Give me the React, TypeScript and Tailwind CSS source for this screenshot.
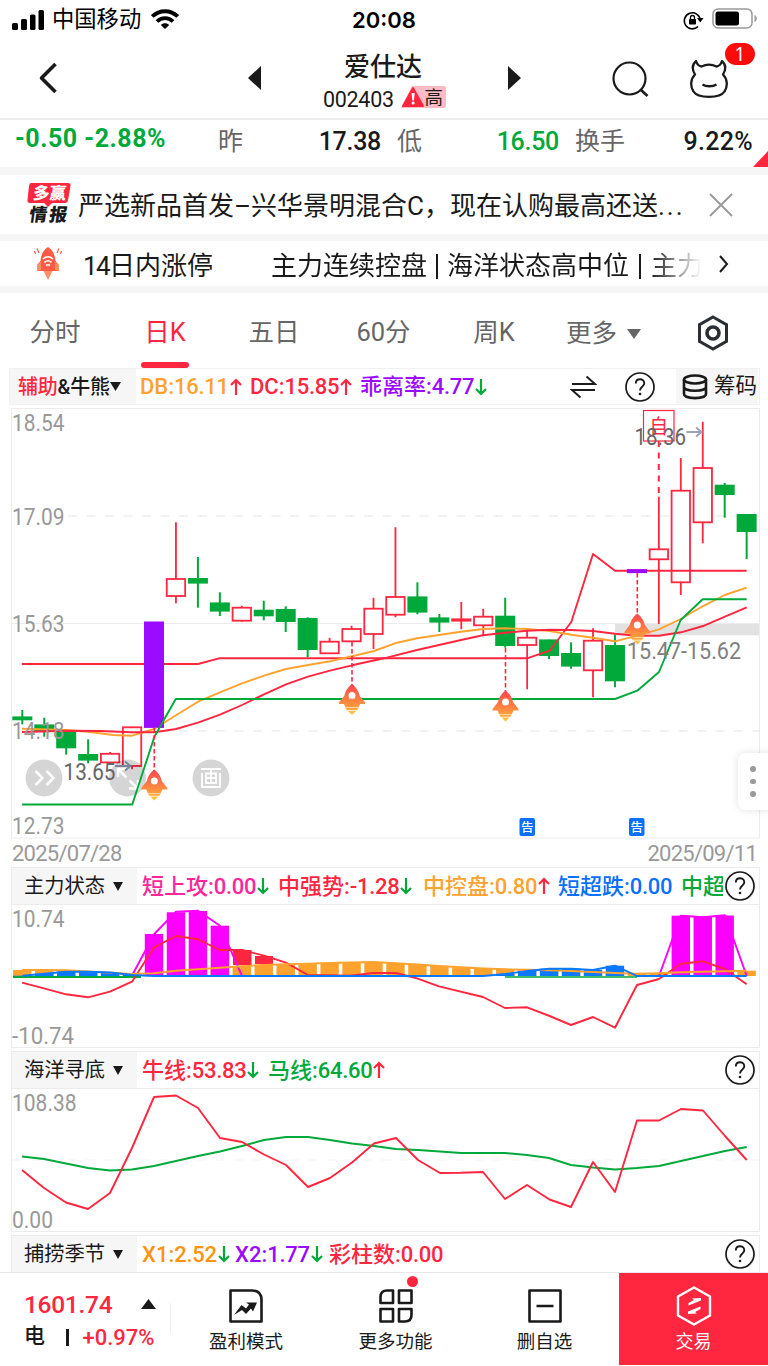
import type { ReactNode } from 'react'
import { clsx } from 'clsx'

const RED = '#ff263f'
const GREEN = '#00a93a'
const ORANGE = '#ffa22e'
const PURPLE = '#9a0bff'
const MAGENTA = '#fb00ff'
const BLUE = '#0a78ff'

// x of the n-th trading day
const dayX = (i: number) => 22.3 + i * 21.95

type Candle = [kind: 'up' | 'down' | 'mark', top: number, bottom: number, high: number, low: number]

const candles: Candle[] = [
  ['down', 716.7, 720, 710, 724.3],
  ['down', 724.7, 731, 717.7, 736.7],
  ['down', 731.7, 748, 731, 754.7],
  ['down', 754.3, 760.3, 739.3, 763.3],
  ['up', 753.8, 762.4, 752, 765],
  ['up', 727.3, 766, 727, 769.3],
  ['mark', 621.7, 727.7, 621.7, 727.7],
  ['up', 579, 596, 522.3, 603.3],
  ['down', 578.3, 583.3, 557, 607.7],
  ['down', 602.7, 611.3, 592.3, 616],
  ['up', 607.7, 620.7, 605.7, 621.7],
  ['down', 610, 616, 600.7, 620.3],
  ['down', 609.3, 621.7, 606.3, 632],
  ['down', 618.3, 649.7, 617.3, 657.3],
  ['up', 641.7, 653.3, 637.7, 654],
  ['up', 629, 641.3, 625.7, 641.3],
  ['up', 608.7, 634, 597.7, 649],
  ['up', 597, 614.7, 527.3, 617.3],
  ['down', 596.7, 612.3, 582.3, 614.3],
  ['down', 617.7, 622.3, 614, 632],
  ['up', 619.3, 620.7, 602, 629.3],
  ['up', 616.7, 625.3, 608.7, 636],
  ['down', 616, 645.7, 597.7, 647.7],
  ['up', 637.7, 645, 629.3, 689.3],
  ['down', 639.7, 655.7, 639.7, 659],
  ['down', 653.3, 666.3, 642.3, 668.7],
  ['up', 640.7, 670.3, 628.3, 697.3],
  ['down', 645.3, 681, 634.7, 687.3],
  ['mark', 569.3, 573, 569.3, 573],
  ['up', 549.3, 559.3, 496.7, 624],
  ['up', 490.7, 582.3, 458, 595],
  ['up', 468, 522.3, 421.7, 543.3],
  ['down', 485, 494.7, 483, 517.7],
  ['down', 514.3, 531.7, 514.3, 559],
]

const upperBand = '22,664 198,664 219,658.3 527,658.3 549.7,650.7 571.3,622 593,554 615,570.7 746.7,570.7'
const lowerBand =
  '22,804.5 132.3,804.5 154.3,737 175.7,699 615,699 637.3,690.7 659,672 680.7,620 702.7,599.3 746.7,599.3'
const dbLine =
  '22,728.7 66,730 88,731.7 113,735 132,735.7 154,729 176,715.3 198,701.7 220,692.3 242,683.3 264,675.7 286,669 308,665 330,661.3 352,656.3 374,651 395,643.3 417,638.3 439,635 461,631.7 483,629 505,628.3 527,629 549.7,631 571.3,634.7 593,637.7 615,641.3 637.3,635.7 659,629.3 680.7,619 702.7,606.3 724.7,595 746.7,587.7'
const dcLine =
  '22,732 66,730.7 100,731 132,732.3 154,732.3 163,731 176,729 198,722.7 220,714.7 242,705 264,694.3 286,684.3 308,676.7 330,670.7 352,665.3 384,658.3 417,650 439,645 461,640 483,635.3 505,632.7 527,630.7 549.7,629.7 571,630 593,631 615,633.7 637,635.7 659,635.7 681,632.3 703,626 725,616.7 746.7,607.3'

const orangeTops = [
  970, 970, 970.3, 971.5, 972.8, 974, 973.3, 970.7, 969.2, 967.7, 966.2, 964.9, 964.2, 963.6, 963, 962.5, 962, 963.3,
  964.5, 966, 967.3, 968.5, 969.3, 969.8, 970.3, 971, 972, 973, 973.7, 973.2, 972.3, 971.7, 971.3, 970.7,
]
const blueTops = [
  975.7, 973.7, 971.7, 971.7, 972.5, 975, 976, 976, 976, 976, 976, 976, 976, 976, 976, 976, 976, 976, 976, 976, 976,
  976, 974, 971, 968.7, 968.7, 970, 965.7, 976, 976, 976, 976, 976, 976,
]
const magentaBars: [number, number][] = [
  [6, 934], [7, 912.3], [8, 911], [9, 925.7], [30, 915.7], [31, 917], [32, 915.5],
]
const strengthLine =
  '22,982.7 44,988.3 66,994.3 88,997.3 110,991.7 132,981.7 154,947.3 176,936 198,939.3 220,950 242,950 264,955.7 286,962.7 308,975 350,975.7 373,973 396,973 417,978.3 439,986.3 483,997 505,1008 527,1007.3 549.7,1016 571,1025 593,1017 615,1027.7 637,985 659,979 681,963.7 703,961.3 725,969 746.7,984.3'

const bullLine =
  '22,1170 44,1188 66,1202.5 88,1209 110,1193 132,1148 154,1097 176,1095.5 198,1108 220,1138 242,1142 264,1154.5 286,1165 308,1187 330,1178 352,1162.5 374,1143.5 396,1138 418,1160 440,1173 461,1172.8 483,1172 505,1199 527,1185 549.5,1199.5 571,1207 593,1162 615,1192 637,1120.5 659,1120.5 681,1109 703,1110.5 725,1136 746.7,1160'
const horseLine =
  '22,1156.5 44,1159 66,1163.5 88,1168 110,1170.5 132,1169.5 154,1166 176,1161 198,1156 220,1151.5 242,1146 264,1140 286,1137 308,1137 330,1140 352,1143.5 374,1146 396,1149 418,1150 440,1151.5 461,1153 505,1153 527,1155 549,1158 571,1165 593,1167.5 615,1169.5 637,1168 659,1166 681,1161 703,1156 725,1151 746.7,1147'

const Line = ({ points, color, width = 1.9 }: { points: string; color: string; width?: number }) => (
  <polyline points={points} fill="none" stroke={color} strokeWidth={width} strokeLinejoin="round" />
)

interface LabelProps {
  x: number
  y: number
  w: number
  size?: number
  color?: string
  children: string
}

function Label({ x, y, w, size = 23, color = '#999', children }: LabelProps) {
  return (
    <text x={x} y={y} fontSize={size} fill={color} textLength={w} lengthAdjust="spacingAndGlyphs">
      {children}
    </text>
  )
}

function Rocket({ x, y }: { x: number; y: number }) {
  return (
    <g transform={`translate(${x - 13} ${y})`}>
      <path
        d="M13 0C16 2.500 19.500 6 20.500 11.500L26 18.500V20H21L19.500 23.500H6.500L5 20H0V18.500L5.500 11.500C6.500 6 10 2.500 13 0Z"
        fill="url(#rocket)"
      />
      <path d="M6.500 24H19.500L18 26.200H8Z" fill="#ffa83e" />
      <path d="M9 27H17L13 31Z" fill="#ffc03e" />
      <circle cx="13" cy="11.500" r="3.500" fill="#fff" />
    </g>
  )
}

function KLineChart() {
  return (
    <svg width="768" height="432" viewBox="0 407 768 432" className="block shrink-0">
      <defs>
        <linearGradient id="rocket" x1="0" y1="0" x2="0" y2="1">
          <stop offset="0" stopColor="#ff4350" />
          <stop offset="1" stopColor="#ff9d3c" />
        </linearGradient>
      </defs>
      <rect x="11.500" y="408.500" width="748" height="429.500" fill="none" stroke="#ececec" />
      <path d="M68 516H759M68 731H759" stroke="#eee" strokeWidth="1.300" strokeDasharray="9 9.500" />
      <path d="M12 623.500H759" stroke="#ececec" />
      <rect x="615" y="624" width="144" height="11.300" fill="#e2e2e2" />

      {candles.map(([kind, top, bottom, high, low], i) => {
        const x = dayX(i)
        if (kind === 'mark') return <rect key={i} x={x - 10} y={top} width="20" height={bottom - top} fill={PURPLE} />
        if (kind === 'down') {
          return (
            <g key={i} fill={GREEN}>
              <rect x={x - 1} y={high} width="2" height={low - high} />
              <rect x={x - 10} y={top - 0.3} width="20" height={bottom - top + 0.6} />
            </g>
          )
        }
        return (
          <g key={i} stroke={RED} strokeWidth="1.800">
            <path d={`M${x} ${high}V${top}M${x} ${bottom}V${low}`} />
            <rect x={x - 9.2} y={top} width="18.400" height={bottom - top} fill="#fff" />
          </g>
        )
      })}

      <Line points={upperBand} color={RED} />
      <Line points={dbLine} color={ORANGE} />
      <Line points={dcLine} color={RED} />
      <rect x={dayX(6) - 10} y="621.700" width="20" height="106" fill={PURPLE} />
      <rect x={dayX(28) - 10} y="569.300" width="20" height="3.800" fill={PURPLE} />

      <g fill="#000" fillOpacity="0.165">
        <circle cx="44" cy="778" r="18.500" />
        <circle cx="127.500" cy="778" r="18.500" />
        <circle cx="211" cy="778" r="18.500" />
      </g>
      <g fill="none" stroke="#fff" strokeWidth="2.500">
        <path d="M35.500 771L42.500 778L35.500 785M46.500 771L53.500 778L46.500 785" />
        <path d="M118 777V769H126M118 769L126.500 777.500M129.500 780.500L138 788.500M138 780V788.500H129" />
        <path d="M201 769H221M202 773V787H220V773M206 773.500H216V783H206ZM211 769V783M206 778H216" strokeWidth="1.800" />
      </g>
      <Line points={lowerBand} color={GREEN} />

      <g stroke={RED} strokeWidth="1.600" strokeDasharray="4.500 2.500">
        <path d="M154.300 728V771M352 642V686M505.500 648V692M637.300 573V615" />
        <path d="M658.800 441V497" strokeWidth="2" strokeDasharray="6 5.500" />
      </g>
      <Rocket x={154.3} y={769.500} />
      <Rocket x={352} y={684} />
      <Rocket x={505.500} y={690.500} />
      <Rocket x={637.300} y={613.500} />

      <Label x={12} y={430.500} w={52.500}>18.54</Label>
      <Label x={12} y={525} w={52.500}>17.09</Label>
      <Label x={12} y={632} w={52.500}>15.63</Label>
      <Label x={12} y={739} w={52.500}>14.18</Label>
      <Label x={12} y={834} w={52.500}>12.73</Label>
      <Label x={63.500} y={780} w={52} color="#666">13.65</Label>
      <Label x={627} y={658.800} w={114} color="#808080">15.47-15.62</Label>

      <g transform="translate(658.700 433.500) scale(0.900 1)">
        <text textAnchor="middle" fontSize="20.500" fill={RED}>自</text>
      </g>
      <rect x="643.500" y="410.500" width="30.500" height="30.500" fill="none" stroke={RED} strokeWidth="1.200" />
      <Label x={634.500} y={445} w={51.500} color="#666">18.36</Label>
      <g fill="none" stroke="#9aa4bd" strokeWidth="1.900">
        <path d="M686.500 432H701.500M696 427.500L701.500 432L696 436.500" />
        <path d="M115 766H130M125 761.500L130.500 766L125 770.500" stroke="#78849c" />
      </g>

      {[519.500, 629].map((x) => (
        <g key={x}>
          <rect x={x} y="818" width="15.500" height="18" rx="2" fill="#0a70ff" />
          <text x={x + 7.75} y="831.500" textAnchor="middle" fontSize="12.500" fontWeight="500" fill="#fff">告</text>
        </g>
      ))}
    </svg>
  )
}

function MainForceChart() {
  const toPoints = (tops: number[]) => tops.map((y, i) => `${dayX(i)},${y}`).join(' ')
  return (
    <svg width="768" height="144" viewBox="0 905 768 144" className="block shrink-0">
      <path d="M11.500 905V1047.500H759.500V905" fill="none" stroke="#ececec" />
      <path d="M13 977H141" stroke={GREEN} strokeWidth="2" />
      {orangeTops.map((y, i) => (
        <rect key={i} x={dayX(i) - 9.2} y={y} width="18.400" height={976 - y} fill={ORANGE} />
      ))}
      {blueTops.map((y, i) => (
        <rect key={i} x={dayX(i) - 9.2} y={y} width="18.400" height={976 - y} fill={BLUE} />
      ))}
      <path d="M233 950H251.500V965H233ZM255 956H273V964H255Z" fill={RED} />
      {magentaBars.map(([i, y]) => (
        <rect key={i} x={dayX(i) - 9.2} y={y} width="18.400" height={976 - y} fill={MAGENTA} />
      ))}
      <Line points="132.300,975 154.300,934 176,911.700 198,910.700 220,925.700 242,976" color={MAGENTA} />
      <Line points="659,976 681,915.700 703,917.300 725,915.300 746.700,976" color={MAGENTA} />
      <Line points={strengthLine} color={RED} />
      <Line points={toPoints(orangeTops)} color={ORANGE} />
      <path d="M505 977H637" stroke={GREEN} strokeWidth="1.500" />
      <Line points={toPoints(blueTops)} color={BLUE} />
      <Label x={12} y={926.500} w={52.500}>10.74</Label>
      <Label x={12} y={1044} w={62}>-10.74</Label>
    </svg>
  )
}

function OceanChart() {
  return (
    <svg width="768" height="144" viewBox="0 1089 768 144" className="block shrink-0">
      <path d="M11.500 1089V1231.500H759.500V1089" fill="none" stroke="#ececec" />
      <path d="M12 1160H759" stroke="#f3f3f3" strokeDasharray="9 9.500" />
      <Label x={12} y={1111} w={64.500}>108.38</Label>
      <Label x={12} y={1228} w={41}>0.00</Label>
      <Line points={horseLine} color={GREEN} />
      <Line points={bullLine} color={RED} />
    </svg>
  )
}

function HelpIcon() {
  return (
    <svg width="30" height="30" viewBox="0 0 30 30" fill="none" stroke="#1a1a1a" className="shrink-0">
      <circle cx="15" cy="15" r="14" strokeWidth="1.700" />
      <path d="M10.800 11.500C10.800 5.800 19.300 6 19.300 11.300C19.300 14.800 15 14.800 15 18.500" strokeWidth="1.900" />
      <circle cx="15" cy="22" r="1.300" fill="#1a1a1a" stroke="none" />
    </svg>
  )
}

function Arrow({ up }: { up?: boolean }) {
  return (
    <svg width="12" height="18" viewBox="0 0 12 18" fill="none" className="ml-px shrink-0" stroke={up ? RED : GREEN} strokeWidth="2.200">
      <path d={up ? 'M6 17V2M1 7L6 2L11 7' : 'M6 1V16M1 11L6 16L11 11'} />
    </svg>
  )
}

interface StatProps {
  label: string
  value: string
  trend?: 'up' | 'down'
  className: string
}

function Stat({ label, value, trend, className }: StatProps) {
  return (
    <div className={clsx('flex shrink-0 items-center whitespace-nowrap text-[22px] font-medium', className)}>
      <span>{label}:</span>
      <span className="tracking-[-0.3px]">{value}</span>
      {trend && <Arrow up={trend === 'up'} />}
    </div>
  )
}

function IndicatorBar({ name, last, children }: { name: string; last?: boolean; children: ReactNode }) {
  return (
    <div className={clsx('ml-[11px] flex w-[749px] shrink-0 items-center border border-[#ececec]', last ? 'h-[37px] border-b-0' : 'h-[38px]')}>
      <div className="flex h-full w-[125px] shrink-0 items-center gap-2 bg-[#f6f6f6] pl-3 text-[20.3px] text-[#1a1a1a]">
        {name}
        <svg width="10" height="9" viewBox="0 0 10 9"><path d="M0 0H10L5 9Z" fill="#1a1a1a" /></svg>
      </div>
      <div className="ml-[5px] flex w-[583px] shrink-0 overflow-hidden">{children}</div>
      <HelpIcon />
    </div>
  )
}

function StatusBar() {
  return (
    <div className="flex h-10 shrink-0 items-center text-black">
      <svg width="32" height="20" viewBox="0 0 32 20" className="ml-3">
        <rect x="0" y="13" width="6" height="7" rx="1.500" />
        <rect x="9" y="9" width="6" height="11" rx="1.500" />
        <rect x="18" y="4.500" width="5.500" height="15.500" rx="1.500" />
        <rect x="26.500" y="0" width="5.500" height="20" rx="1.500" />
      </svg>
      <span className="ml-2 w-[91px] text-[22.3px]">中国移动</span>
      <svg width="28" height="20" viewBox="0 0 28 20" className="mb-0.5 ml-2" fill="none" stroke="#000" strokeWidth="3.800">
        <path d="M1.300 7.500C8.500 0.500 19.500 0.500 26.700 7.500M6 12.500C10.500 8 17.500 8 22 12.500" />
        <path d="M9.800 16C12.200 13.600 15.800 13.600 18.200 16L14 20Z" fill="#000" stroke="none" />
      </svg>
      <span className="ml-[173px] w-[67px] font-['Inter'] text-[22px] font-semibold">20:08</span>
      <svg width="21" height="20" viewBox="0 0 21 20" fill="none" stroke="#000" strokeWidth="1.600" className="ml-[264px]">
        <path d="M15 16.500A8 8 0 1 1 17.300 10" />
        <path d="M14 8H20.500L17.300 12.500Z" fill="#000" stroke="none" />
        <rect x="6" y="9" width="7" height="5.500" rx="0.800" fill="#000" stroke="none" />
        <path d="M7.500 9V7.500A2 2 0 0 1 11.500 7.500V9" strokeWidth="1.300" />
      </svg>
      <svg width="46" height="22" viewBox="0 0 46 22" className="mb-0.5 ml-2">
        <rect x="1" y="1" width="39" height="19" rx="5" fill="none" stroke="#999" strokeWidth="1.500" />
        <rect x="3.500" y="3.500" width="23.500" height="14" rx="2.500" />
        <path d="M42.500 7V14C45.500 13 45.500 8 42.500 7Z" fill="#999" />
      </svg>
    </div>
  )
}

function Header() {
  return (
    <header className="flex h-20 shrink-0 items-center border-b-2 border-[#ececec] text-[#1a1a1a]">
      <svg width="20" height="32" viewBox="0 0 20 32" className="mb-0.5 ml-[38px]" fill="none" stroke="#1a1a1a" strokeWidth="3.600">
        <path d="M17.500 2L3.500 16L17.500 30" strokeLinejoin="round" />
      </svg>
      <svg width="13" height="24" viewBox="0 0 13 24" className="mb-0.5 ml-[190px]"><path d="M13 0V24L0 12Z" fill="#1a1a1a" /></svg>
      <div className="ml-[62px] mt-1.5 flex w-[124px] flex-col items-start">
        <h1 className="ml-[21px] text-[26px] font-medium leading-[34px]">爱仕达</h1>
        <div className="flex h-[30px] items-center">
          <span className="mt-0.5 w-[78px] text-[21.5px] tracking-[-0.3px]">002403</span>
          <svg width="45" height="22" viewBox="0 0 45 22" className="mb-1">
            <path d="M11 0H43Q45 0 45 2V20Q45 22 43 22H0Z" fill="#ffbbc4" />
            <path d="M12 2L22 20H2Z" fill={RED} stroke={RED} strokeWidth="2" strokeLinejoin="round" />
            <path d="M10.500 7H13.700L12.900 14.500H11.300Z" fill="#fff" />
            <circle cx="12.100" cy="17" r="1.500" fill="#fff" />
            <text x="23.500" y="18" fontSize="18.500" fill="#1a1a1a">高</text>
          </svg>
        </div>
      </div>
      <svg width="13" height="24" viewBox="0 0 13 24" className="mb-0.5 ml-[61px]"><path d="M0 0V24L13 12Z" fill="#1a1a1a" /></svg>
      <svg width="37" height="37" viewBox="0 0 37 37" fill="none" stroke="#1a1a1a" strokeWidth="2.200" className="ml-[91px] mt-px">
        <circle cx="17.500" cy="17.500" r="16" />
        <path d="M28.500 28.500L35.500 35" strokeWidth="2.600" />
      </svg>
      <div className="relative ml-[41px]">
        <svg width="38" height="40" viewBox="0 0 38 40" fill="none" stroke="#1a1a1a" strokeWidth="2.300" strokeLinejoin="round">
          <path d="M6 2C2 5.500 2 10.500 5 15.500C0.500 20 0 27.500 3.500 32.500C6 36.500 11 37.800 19 37.800C27 37.800 32 36.500 34.500 32.500C38 27.500 37.500 20 33 15.500C36 10.500 36 5.500 32 2C31 5.500 29.500 7 26.500 7.500C22 5.300 16 5.300 11.500 7.500C8.500 7 7 5.500 6 2Z" />
          <path d="M12.500 25.500C16 27.800 22.500 27.800 26.500 25.500" />
        </svg>
        <span className="absolute left-[35px] top-[-16px] flex h-[22px] w-[30px] items-center justify-center rounded-full bg-[#ff0a0a] pt-px font-['Noto_Sans'] text-[19px] text-white">
          1
        </span>
      </div>
    </header>
  )
}

function QuoteRow() {
  return (
    <div className="flex h-[47px] shrink-0 items-center text-[25px] text-[#1a1a1a]">
      <span className="mb-[10px] ml-[15px] w-[203px] text-[25px] font-bold tracking-[0.5px] text-[#00a93a]">-0.50 -2.88%</span>
      <span className="mb-1 w-[25px] text-[#666]">昨</span>
      <span className="mb-1 w-[138px] text-right font-medium tracking-[-0.3px]">17.38</span>
      <span className="mb-1 ml-4 w-[25px] text-[#666]">低</span>
      <span className="mb-1 w-[137px] text-right font-medium tracking-[-0.3px] text-[#00a93a]">16.50</span>
      <span className="mb-1 ml-4 w-[51px] text-[#666]">换手</span>
      <span className="mb-1 w-[127px] text-right font-medium tracking-[0.3px]">9.22%</span>
      <svg width="15" height="16" viewBox="0 0 15 16" className="self-end"><path d="M15 0V16H0Z" fill={RED} /></svg>
    </div>
  )
}

function NoticeRow() {
  return (
    <div className="flex h-[59px] shrink-0 items-center bg-white text-[26px] text-[#1a1a1a]">
      <svg width="48" height="42" viewBox="0 0 48 42" className="mb-1 ml-[26px] shrink-0">
        <path d="M5 1H42Q45 1 44.500 4L42 18Q41.500 21 39 21H26L22 25L18 21H4Q1 21 1.500 18L3 4Q3.500 1 5 1Z" fill={RED} />
        <g fontWeight="900">
          <g transform="translate(6.500 17) skewX(-6)"><text fontSize="16.500" fill="#fff">多赢</text></g>
          <g transform="translate(2.500 39) skewX(-8)"><text fontSize="18" fill="#1a1a1a" textLength="38">情报</text></g>
        </g>
      </svg>
      <span className="ml-1 mt-1 w-[606px] shrink-0 whitespace-nowrap">
        严选新品首发–兴华景明混合C，现在认购最高还送<span className="tracking-[2px]">...</span>
      </span>
      <svg width="24" height="24" viewBox="0 0 24 24" className="ml-[25px]">
        <path d="M1 1L23 23M23 1L1 23" stroke="#999" strokeWidth="1.900" />
      </svg>
    </div>
  )
}

function SignalRow() {
  return (
    <div className="flex h-[45px] shrink-0 items-center bg-white text-[26px] text-[#1a1a1a]">
      <svg width="28" height="33" viewBox="0 0 28 33" className="ml-[34px] shrink-0">
        <path d="M9 23H19L17 27L14 33L11 27Z" fill="#ff9068" />
        <path d="M14 0C19 3 21 8 21.500 14L25 18V24H3V18L6.500 14C7 8 9 3 14 0Z" fill="#ff5a44" />
        <path d="M3 18L7 15V23L3 24ZM25 18L21 15V23L25 24Z" fill="#ff9068" />
        <g fill="none" stroke="#fff" strokeWidth="1.600">
          <path d="M9 12Q14 7.500 19 12M10.500 15.500Q14 12 17.500 15.500M12 18.500Q14 17 16 18.500" />
          <path d="M5 6L3 1.500M1.500 7L0.500 4M23 6L25 1.500M26.500 7L27.500 4" stroke="#ff5a44" strokeWidth="1.200" />
        </g>
      </svg>
      <span className="ml-[21px] mt-1.5 w-[188px] shrink-0 whitespace-nowrap"><span className="tracking-[-1.6px]">14</span>日内涨停</span>
      <div className="mt-1.5 w-[431px] shrink-0 overflow-hidden whitespace-nowrap [mask-image:linear-gradient(to_right,#000_88%,transparent)]">
        <span>主力连续控盘</span>
        <span className="mx-[9px] inline-block h-[25px] w-[2px] bg-[#1a1a1a] align-[-4px]" />
        <span>海洋状态高中位</span>
        <span className="mx-[10px] inline-block h-[25px] w-[2px] bg-[#1a1a1a] align-[-4px]" />
        <span>主力</span>
      </div>
      <svg width="10" height="18" viewBox="0 0 10 18" fill="none" className="ml-[17px]">
        <path d="M1 1L8 9L1 17" stroke="#1a1a1a" strokeWidth="2" />
      </svg>
    </div>
  )
}

const periods = [
  { name: '分时', width: 'w-[110px]' },
  { name: '日K', width: 'w-[110px]', active: true },
  { name: '五日', width: 'w-[108px]' },
  { name: '60分', width: 'w-[111px]' },
  { name: '周K', width: 'w-[110px]' },
]

function PeriodTabs() {
  return (
    <nav className="flex h-[75px] shrink-0 items-center bg-white text-[25.5px] text-[#666]">
      {periods.map((p) => (
        <div key={p.name} className={clsx('flex h-full shrink-0 flex-col items-center justify-end', p.width, p.active && 'text-[#ff263f]')}>
          <span className="leading-[38px]">{p.name}</span>
          <span className={clsx('mt-[11px] h-[6px] w-12 rounded-full', p.active && 'bg-[#ff263f]')} />
        </div>
      ))}
      <div className="ml-[17px] mt-1.5 flex items-center">
        更多
        <svg width="14" height="10" viewBox="0 0 14 10" className="ml-[10px]"><path d="M0 0H14L7 10Z" fill="#666" /></svg>
      </div>
      <svg width="32" height="36" viewBox="0 0 32 36" fill="none" stroke="#2b2e33" className="ml-[56px] mt-1">
        <path d="M16 2L29.500 9.700V26.300L16 34L2.500 26.300V9.700Z" strokeWidth="3" />
        <circle cx="16" cy="18" r="6" strokeWidth="3.600" />
      </svg>
    </nav>
  )
}

function OverlayBar() {
  return (
    <div className="ml-[9px] flex h-[37px] w-[751px] shrink-0 items-center border border-[#f1f1f1] text-[21px] text-[#1a1a1a]">
      <div className="flex h-full w-[126px] shrink-0 items-center whitespace-nowrap bg-[#f6f6f6] pl-2 text-[20px] font-medium tracking-[-0.2px]">
        <span className="text-[#ff263f]">辅助</span>&amp;牛熊
        <svg width="11" height="9" viewBox="0 0 11 9"><path d="M0 0H11L5.500 9Z" fill="#1a1a1a" /></svg>
      </div>
      <Stat label="DB" value="16.11" trend="up" className="ml-[4px] w-[110px] text-[#ffa22e]" />
      <Stat label="DC" value="15.85" trend="up" className="w-[110px] text-[#ff263f]" />
      <Stat label="乖离率" value="4.77" trend="down" className="w-[210px] text-[#9a0bff]" />
      <svg width="27" height="24" viewBox="0 0 27 24" fill="none" stroke="#1a1a1a" strokeWidth="1.900" className="shrink-0">
        <path d="M2 9H25L16.500 1.500M25 15H2L10.500 22.500" />
      </svg>
      <div className="ml-7 mr-[21px] flex"><HelpIcon /></div>
      <div className="flex h-full w-[82px] shrink-0 items-center bg-[#f6f6f6] pl-1.5">
        <svg width="26" height="26" viewBox="0 0 26 26" fill="none" stroke="#1a1a1a" strokeWidth="2.600" className="shrink-0">
          <ellipse cx="13" cy="5.500" rx="11" ry="4" />
          <path d="M2 5.500V20C2 25.500 24 25.500 24 20V5.500M2 13C2 18 24 18 24 13" />
        </svg>
        <span className="ml-1.5 whitespace-nowrap text-[21.5px]">筹码</span>
      </div>
    </div>
  )
}

function BottomBar() {
  return (
    <footer className="flex h-[94px] shrink-0 border-t border-[#e8e8e8] bg-white text-[#1a1a1a]">
      <div className="w-[170px] shrink-0 pl-6 pt-4">
        <div className="flex h-[33px] items-center text-[24.5px] font-medium tracking-[-0.3px] text-[#ff263f]">
          <span className="w-[117px]">1601.74</span>
          <svg width="15" height="10" viewBox="0 0 15 10" className="mb-1"><path d="M0 10H15L7.500 0Z" fill="#1a1a1a" /></svg>
        </div>
        <div className="flex h-[30px] items-center text-[21px] font-medium">
          <span className="w-[42px]">电</span>
          <span className="h-[17px] w-[2.5px] bg-[#1a1a1a]" />
          <span className="ml-[14px] text-[22px] text-[#ff263f]">+0.97%</span>
        </div>
      </div>
      <span className="mt-[30px] h-[30px] w-px bg-[#eee]" />
      <BottomItem label="盈利模式" className="w-[150px]">
        <path d="M1.500 1.500H23Q32.500 1.500 32.500 11V32.500H1.500Z" strokeLinejoin="round" />
        <path d="M5 26L12.500 16L17 19.500L20 15.500L17 13.500H28L24 22.500L22 19.500L17 25L13 21Z" fill="#1a1a1a" stroke="none" />
      </BottomItem>
      <BottomItem label="更多功能" dot className="w-[149px]">
        <path d="M1.500 14V8Q1.500 1.500 8 1.500H14V14ZM20 1.500H32.500V14H20ZM1.500 20H14V32.500H1.500ZM20 20H32.500V26Q32.500 32.500 26 32.500H20Z" strokeLinejoin="round" />
      </BottomItem>
      <BottomItem label="删自选" className="w-[149px]">
        <path d="M1.500 1.500H32.500V32.500H1.500ZM8.500 17H25.500" strokeLinejoin="round" />
      </BottomItem>
      <div className="mb-px flex w-[149px] flex-col items-center bg-[#ff263f] pt-[13px] text-[18px] text-white">
        <svg width="36" height="40" viewBox="0 0 36 40" fill="none" stroke="#fff" strokeWidth="2.400">
          <path d="M18 1.500L34 10.500V29.500L18 38.500L2 29.500V10.500Z" strokeLinejoin="round" />
          <path d="M12.500 19.500V17L18 14L16 12.500L25 12V14.500ZM24.500 20.500V23L19 26L21 27.500L12 28V25.500Z" fill="#fff" stroke="none" />
        </svg>
        <span className="mt-[2px]">交易</span>
      </div>
    </footer>
  )
}

interface BottomItemProps {
  label: string
  dot?: boolean
  className: string
  children: ReactNode
}

function BottomItem({ label, dot, className, children }: BottomItemProps) {
  return (
    <div className={clsx('relative flex shrink-0 flex-col items-center pt-4 text-[18.5px]', className)}>
      <svg width="34" height="34" viewBox="0 0 34 34" fill="none" stroke="#1a1a1a" strokeWidth="2.600">{children}</svg>
      {dot && <span className="absolute left-[86px] top-[3px] size-[11px] rounded-full bg-[#ff263f]" />}
      <span className="mt-[6px] whitespace-nowrap">{label}</span>
    </div>
  )
}

export default function App() {
  return (
    <div className="relative flex h-[1366px] w-[768px] flex-col overflow-hidden bg-white font-['Roboto','Noto_Sans_CJK_SC',sans-serif]">
      <StatusBar />
      <Header />
      <QuoteRow />
      <div className="flex shrink-0 flex-col gap-[7px] bg-[#f6f6f6] pt-2">
        <NoticeRow />
        <SignalRow />
        <PeriodTabs />
      </div>
      <OverlayBar />
      <div className="h-[2px] shrink-0" />
      <KLineChart />
      <div className="flex h-[28px] shrink-0 items-center justify-between pl-3 pr-[11px] text-[22px] tracking-[-0.75px] text-[#999]">
        <span>2025/07/28</span>
        <span>2025/09/11</span>
      </div>
      <IndicatorBar name="主力状态">
        <Stat label="短上攻" value="0.00" trend="down" className="w-[136px] text-[#ff269b]" />
        <Stat label="中强势" value="-1.28" trend="down" className="w-[145px] text-[#ff263f]" />
        <Stat label="中控盘" value="0.80" trend="up" className="w-[135px] text-[#ffa22e]" />
        <Stat label="短超跌" value="0.00" className="w-[123px] text-[#0a70ff]" />
        <Stat label="中超" value="" className="w-[42px] overflow-hidden text-[#00a93a]" />
      </IndicatorBar>
      <MainForceChart />
      <div className="h-[2px] shrink-0" />
      <IndicatorBar name="海洋寻底">
        <Stat label="牛线" value="53.83" trend="down" className="w-[126px] text-[#ff263f]" />
        <Stat label="马线" value="64.60" trend="up" className="text-[#00a93a]" />
      </IndicatorBar>
      <OceanChart />
      <div className="h-[2px] shrink-0" />
      <IndicatorBar name="捕捞季节" last>
        <Stat label="X1" value="2.52" trend="down" className="w-[93px] text-[#ff930f]" />
        <Stat label="X2" value="1.77" trend="down" className="w-[94px] text-[#9a0bff]" />
        <Stat label="彩柱数" value="0.00" className="text-[#ff263f]" />
      </IndicatorBar>
      <BottomBar />

      <div className="absolute right-[-8px] top-[753px] flex h-[57px] w-[38px] flex-col items-center justify-center gap-[7px] rounded-lg bg-white pr-2 shadow-[0_0_8px_rgba(0,0,0,0.12)]">
        <span className="size-[5.5px] rounded-full bg-[#999]" />
        <span className="size-[5.5px] rounded-full bg-[#999]" />
        <span className="size-[5.5px] rounded-full bg-[#999]" />
      </div>
    </div>
  )
}
